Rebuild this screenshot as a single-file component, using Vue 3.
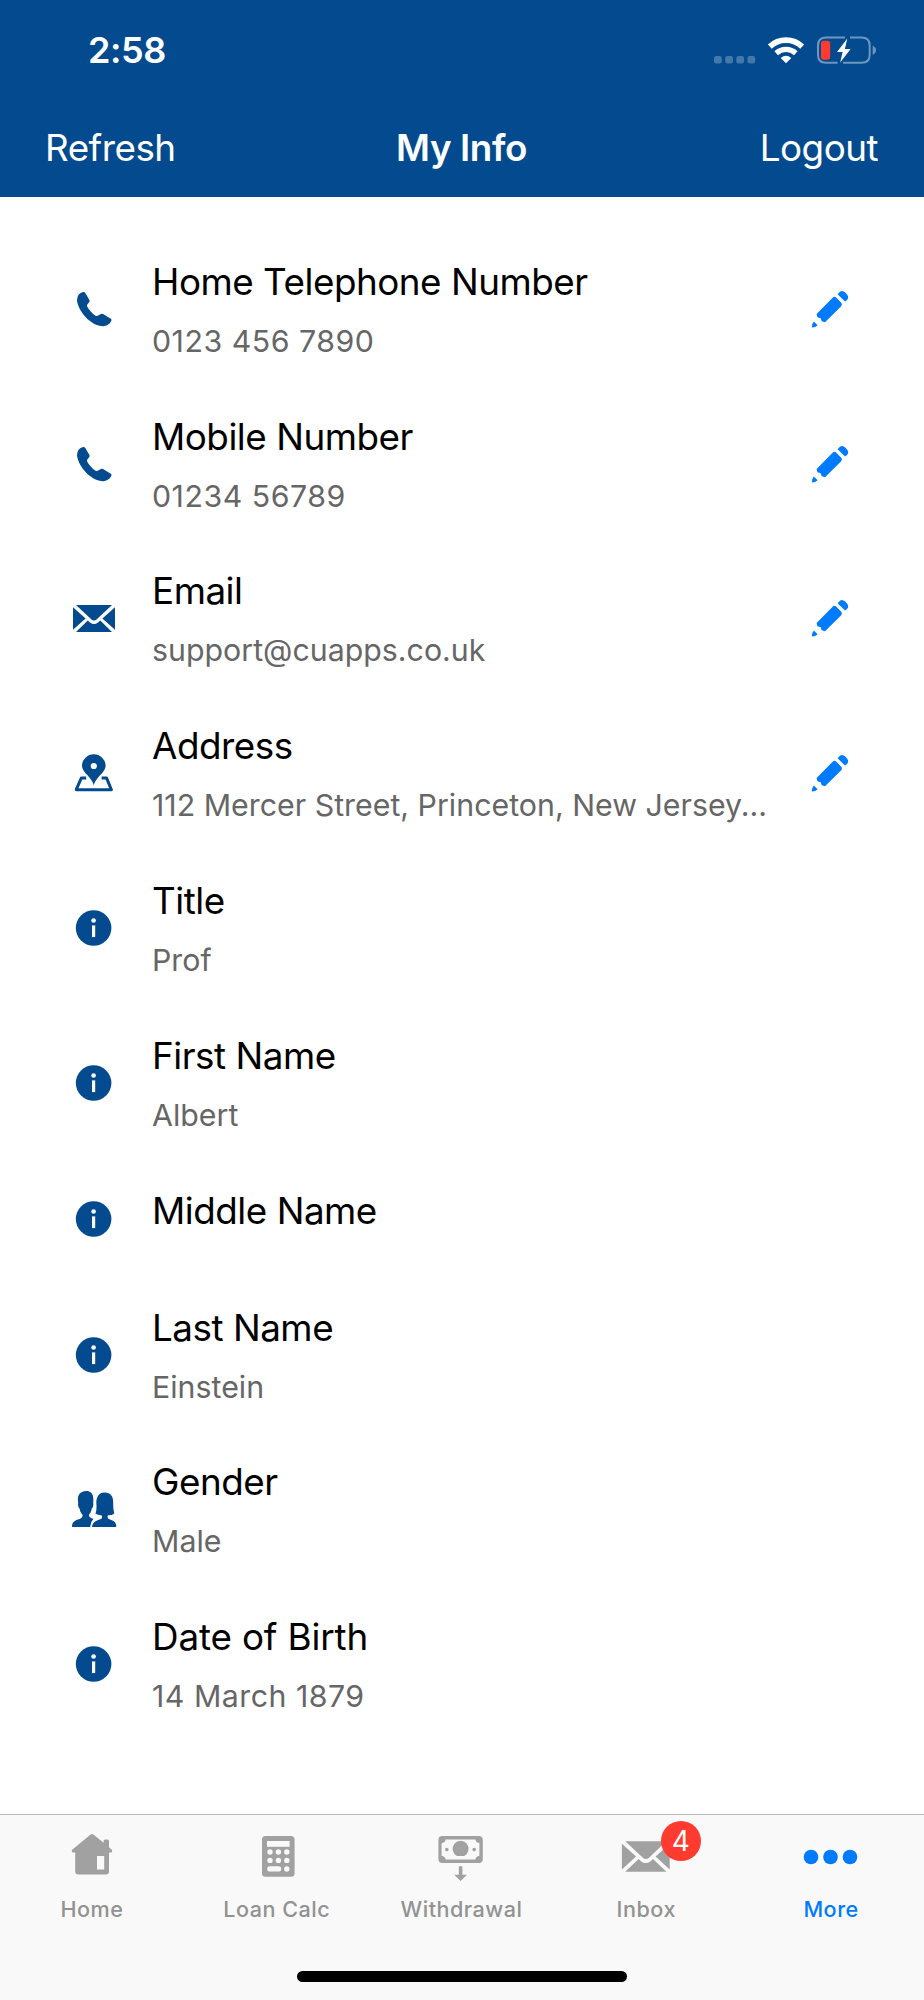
<script setup>
import { ref } from 'vue'

const fields = ref([
	{ id: 1, label: 'Home Telephone Number', value: '0123 456 7890', icon: 'phone', editable: true },
	{ id: 2, label: 'Mobile Number', value: '01234 56789', icon: 'phone', editable: true },
	{ id: 3, label: 'Email', value: 'support@cuapps.co.uk', icon: 'mail', editable: true },
	{
		id: 4,
		label: 'Address',
		value: '112 Mercer Street, Princeton, New Jersey...',
		icon: 'map',
		editable: true
	},
	{ id: 5, label: 'Title', value: 'Prof', icon: 'info' },
	{ id: 6, label: 'First Name', value: 'Albert', icon: 'info' },
	{ id: 7, label: 'Middle Name', value: '', icon: 'info' },
	{ id: 8, label: 'Last Name', value: 'Einstein', icon: 'info' },
	{ id: 9, label: 'Gender', value: 'Male', icon: 'people' },
	{ id: 10, label: 'Date of Birth', value: '14 March 1879', icon: 'info', date: true }
])

const tabs = [
	{ name: 'Home', icon: 'home' },
	{ name: 'Loan Calc', icon: 'calc' },
	{ name: 'Withdrawal', icon: 'cash' },
	{ name: 'Inbox', icon: 'mail', badge: 4 },
	{ name: 'More', icon: 'more' }
]
const activeTab = ref('More')
</script>

<template>
	<div class="screen">
		<header>
			<div class="status-bar">
				<span class="time">2:58</span>
				<svg class="status-icons" viewBox="0 0 163 28">
					<g fill="#fff" opacity="0.25">
						<rect x="0" y="20" width="7.8" height="7.6" rx="2.4" />
						<rect x="11.2" y="20" width="7.8" height="7.6" rx="2.4" />
						<rect x="22.3" y="20" width="7.8" height="7.6" rx="2.4" />
						<rect x="33.4" y="20" width="7.8" height="7.6" rx="2.4" />
					</g>
					<g fill="none" stroke="#fff">
						<path d="M55.8 10.6 A23.6 23.6 0 0 1 88.2 10.6" stroke-width="5.6" />
						<path d="M62.2 17.2 A14.4 14.4 0 0 1 81.8 17.2" stroke-width="5.4" />
					</g>
					<path d="M66.7 22 Q72 17.6 77.3 22 L72 27.2Z" fill="#fff" />
					<path
						d="M131 1.4 H112 Q104 1.4 104 9.4 V18.8 Q104 26.8 112 26.8 H123.5 M129 26.8 H147.5 Q155.7 26.8 155.7 18.8 V9.4 Q155.7 1.4 147.5 1.4 H136"
						fill="none"
						stroke="#6f96bf"
						stroke-width="2"
					/>
					<path d="M158.7 9.6 Q162 11.5 162 14.2 Q162 17 158.7 18.8Z" fill="#6f96bf" />
					<rect x="107" y="4.8" width="9.2" height="19" rx="3.2" fill="#ff3b30" />
					<path d="M133.3 2.6 L123 16 H128.6 L126.2 26.6 L136.6 13 H130.9Z" fill="#fff" />
				</svg>
			</div>
			<nav class="nav-bar">
				<span class="nav-action">Refresh</span>
				<h1>My Info</h1>
				<span class="nav-action right">Logout</span>
			</nav>
		</header>

		<main>
			<div v-for="field in fields" :key="field.id" class="row" :class="{ short: !field.value }">
				<svg v-if="field.icon === 'phone'" class="row-icon" viewBox="0 0 44 44">
					<path
						d="M11.3 5 Q5 6.4 5 13.5 C6.2 24 18.5 39.2 31.5 39.2 Q37.6 38.4 39.5 33.2 Q39.5 32.3 38.8 31.8 L31 27 Q29.9 26.4 28.9 26.9 L25.2 29 Q24.4 29.3 23.6 28.8 C20.4 26.6 16.8 22.8 15 19.2 Q14.8 18.4 15.3 17.6 L17.3 15 Q17.8 14.3 17.5 13.3 L13.3 5.9 Q12.5 4.8 11.3 5Z"
					/>
				</svg>
				<svg v-else-if="field.icon === 'mail'" class="row-icon" viewBox="0 0 44 44">
					<path d="M4 9 H40 L24.8 23.3 Q22 25.9 19.2 23.3Z" />
					<path d="M1 11.2 L13.6 22.5 L1 33.7Z M43 11.2 V33.7 L30.4 22.5Z" />
					<path
						d="M4 36 L15.8 24.5 L18 26.5 Q22 29.7 26 26.5 L28.2 24.5 L40 36Z"
					/>
				</svg>
				<svg v-else-if="field.icon === 'map'" class="row-icon" viewBox="0 0 44 44">
					<path
						fill-rule="evenodd"
						d="M21.7 34.1 Q20.6 30 15.5 24.3 Q10 19 10 14.7 A11.8 11.4 0 0 1 33.6 14.7 Q33.6 19 28 24.3 Q22.9 30 21.7 34.1Z M21.8 11.9 A3.1 3.1 0 1 0 21.8 18.1 A3.1 3.1 0 1 0 21.8 11.9Z"
					/>
					<path
						d="M14.2 27.1 H9.3 L4.2 38.7 H39.4 L34.6 27.1 H29.6"
						fill="none"
						stroke="#034b8e"
						stroke-width="3"
						stroke-linejoin="round"
					/>
				</svg>
				<svg v-else-if="field.icon === 'people'" class="row-icon" viewBox="0 0 44 44">
					<path
						d="M0 40 C0 35 2.6 33.4 7.6 32 Q10.8 31 10.6 28 Q8 25.4 7.5 21.4 Q5.6 20 6.2 15.5 C4.8 8.6 8 4.2 14 4 C19.5 4 22 7.4 21.2 15.5 Q21.8 20 19.8 21.4 Q19.2 25.4 16.9 28 Q16.7 30.4 21.4 31.8 Q19 34.5 18.2 40Z"
					/>
					<path
						d="M20 40 Q20.4 35.2 25 33.4 L29.4 31.8 Q30.6 30 29.5 28.2 Q26.4 28.6 23.5 26.6 Q25 23 24.3 15.5 C24.5 8.5 28 5.2 32.5 5.4 C39 5.4 41.4 9.5 41.2 16 Q41 22 42.3 26.4 Q39.5 28.5 35.9 28.2 Q35 30 36.3 31.8 L40.4 33.4 Q44.3 34.8 44.3 40Z"
					/>
				</svg>
				<svg v-else class="row-icon" viewBox="0 0 44 44">
					<circle cx="21.6" cy="22" r="17.8" />
					<circle cx="21.6" cy="14.5" r="2.3" fill="#fff" />
					<rect x="20" y="19.4" width="3.2" height="11.7" fill="#fff" />
				</svg>

				<div class="row-text" :class="{ date: field.date, numeric: field.icon === 'phone' }">
					<p class="label">{{ field.label }}</p>
					<p v-if="field.value" class="value">{{ field.value }}</p>
				</div>

				<svg v-if="field.editable" class="edit-icon" viewBox="0 0 38 38">
					<path
						d="M28.7 1.9 Q31.4 -0.1 34.2 2.6 L36 4.5 Q38.4 7.5 36 9.9 L34 11.6 L26.6 4.2Z M22.4 7 Q23.8 6.3 25.1 7.5 L30.5 13.1 Q31.4 14.7 30.2 16.2 L14 32.3 L10.7 31.3 L9.7 28.3 L6.4 27.2 L5.6 23.9Z M2.9 31.5 L6.6 35.2 Q4.4 37.6 0.8 37.5 Q0.7 33.9 2.9 31.5Z"
					/>
				</svg>
			</div>
		</main>

		<footer>
			<div class="tabs">
				<a
					v-for="tab in tabs"
					:key="tab.name"
					class="tab"
					:class="{ active: tab.name === activeTab }"
					@click="activeTab = tab.name"
				>
					<div class="tab-icon">
						<svg v-if="tab.icon === 'home'" viewBox="0 0 48 48">
							<path
								fill-rule="evenodd"
								d="M22.6 1.5 Q24 0.4 25.4 1.5 L35.6 9.8 V8 Q35.6 6.4 37.2 6.4 H39.4 Q41 6.4 41 8 V14.3 L43.8 16.8 Q44.8 18.2 43.6 19.4 H41 V38.3 Q41 41.6 37.7 41.6 H10.4 Q7.2 41.6 7.2 38.3 V19.4 H4.4 Q3 18.2 4.2 16.8Z M29 23 V36.6 H36.2 V23Z"
							/>
						</svg>
						<svg v-else-if="tab.icon === 'calc'" viewBox="0 0 48 48">
							<rect x="9" y="3" width="32.6" height="40.8" rx="3.6" />
							<g fill="#f9f9f9">
								<rect x="14" y="8" width="22.6" height="5.8" />
								<circle cx="17" cy="19" r="2.7" />
								<circle cx="25.4" cy="19" r="2.7" />
								<circle cx="33.8" cy="19" r="2.7" />
								<circle cx="17" cy="27.4" r="2.7" />
								<circle cx="25.4" cy="27.4" r="2.7" />
								<circle cx="33.8" cy="27.4" r="2.7" />
								<rect x="14.2" y="33.2" width="14" height="5.4" rx="2.7" />
								<circle cx="33.8" cy="36" r="2.7" />
							</g>
						</svg>
						<svg v-else-if="tab.icon === 'cash'" viewBox="0 0 48 48">
							<rect x="0.4" y="3" width="44.4" height="27" rx="4" />
							<path
								fill="#f9f9f9"
								d="M7.6 6.6 H37.4 Q37.8 9.8 41.4 10.2 V22.8 Q37.8 23.2 37.4 26.5 H7.6 Q7.2 23.2 3.6 22.8 V10.2 Q7.2 9.8 7.6 6.6Z"
							/>
							<path d="M19 23 A8 8 0 1 1 26.2 23Z" />
							<circle cx="8.8" cy="16.6" r="1.8" />
							<circle cx="36.2" cy="16.6" r="1.8" />
							<path d="M20.8 33.3 H24.4 V41.8 H29 L22.6 48 L16.2 41.8 H20.8Z" />
						</svg>
						<svg v-else-if="tab.icon === 'mail'" viewBox="0 0 48 48">
							<path d="M2.2 8.2 H43.4 L26.2 24.6 Q22.8 27.6 19.6 24.6Z" />
							<path d="M-1.1 10.8 L13 23.6 L-1.1 36.4Z M46.7 10.8 V36.4 L32.6 23.6Z" />
							<path d="M2.2 38.8 L15.6 26 L18 28.2 Q22.8 32 27.6 28.2 L30 26 L43.4 38.8Z" />
						</svg>
						<svg v-else viewBox="0 0 48 48">
							<circle cx="3" cy="24" r="7.3" />
							<circle cx="22.5" cy="24" r="7.3" />
							<circle cx="42" cy="24" r="7.3" />
						</svg>
						<span v-if="tab.badge" class="badge">{{ tab.badge }}</span>
					</div>
					<span class="tab-name">{{ tab.name }}</span>
				</a>
			</div>
			<div class="home-indicator"></div>
		</footer>
	</div>
</template>

<style>
body {
	margin: 0;
	background: #fff;
}
</style>

<style scoped>
.screen {
	width: 924px;
	height: 2000px;
	display: flex;
	flex-direction: column;
	overflow: hidden;
	background: #fff;
	font-family: Inter, 'Liberation Sans', sans-serif;
}
svg {
	display: block;
	overflow: visible;
}

/* header */
header {
	height: 197px;
	background: #034b8e;
	color: #fff;
}
.status-bar {
	box-sizing: border-box;
	height: 125px;
	padding: 28px 47px 0 88px;
	display: flex;
	justify-content: space-between;
	align-items: flex-start;
}
.time {
	font-size: 36px;
	line-height: 44px;
	font-weight: 600;
	letter-spacing: -0.4px;
}
.status-icons {
	width: 163px;
	height: 28px;
	margin-top: 8px;
}
.nav-bar {
	display: grid;
	grid-template-columns: 1fr auto 1fr;
	padding: 0 46px 0 45px;
	font-size: 36.8px;
	line-height: 45px;
}
.nav-action {
	letter-spacing: -0.5px;
}
.right {
	text-align: right;
}
h1 {
	margin: 0;
	font-size: inherit;
	font-weight: 600;
	letter-spacing: -0.4px;
}

/* list */
main {
	flex: 1;
	padding-top: 34.4px;
}
.row {
	box-sizing: border-box;
	height: 154.8px;
	display: flex;
	align-items: center;
	padding: 0 75px 0 72px;
}
.row.short {
	height: 117px;
}
.row-icon {
	width: 44px;
	height: 44px;
	flex-shrink: 0;
	fill: #034b8e;
}
.row-text {
	flex: 1;
	align-self: flex-start;
	padding-top: 26.5px;
	margin-left: 36px;
	white-space: nowrap;
}
p {
	margin: 0;
}
.label {
	font-size: 36.8px;
	line-height: 48px;
	letter-spacing: -0.47px;
	color: #000;
}
.value {
	margin-top: 15px;
	font-size: 30.3px;
	line-height: 40px;
	letter-spacing: 0.02px;
	color: #666;
}
.numeric .value,
.date .value {
	letter-spacing: 0.5px;
}
.date .label {
	letter-spacing: -0.15px;
}
.edit-icon {
	width: 38px;
	height: 38px;
	fill: #007aff;
}

/* tab bar */
footer {
	box-sizing: border-box;
	height: 186px;
	padding-bottom: 18px;
	display: flex;
	flex-direction: column;
	justify-content: space-between;
	align-items: center;
	background: #f9f9f9;
	border-top: 1px solid #b9b9b9;
}
.tabs {
	width: 100%;
	display: flex;
}
.tab {
	flex: 1;
	display: flex;
	flex-direction: column;
	align-items: center;
	padding-top: 18px;
	color: #929292;
	fill: #a1a1a1;
}
.tab.active {
	color: #007aff;
	fill: #007aff;
}
.tab-icon {
	position: relative;
	width: 48px;
	height: 48px;
}
.badge {
	position: absolute;
	top: -12px;
	left: 38px;
	width: 40px;
	height: 40px;
	border-radius: 50%;
	background: #ff3b30;
	color: #fff;
	font-size: 28px;
	line-height: 40px;
	text-align: center;
}
.tab-name {
	margin-top: 14px;
	margin-right: 1px;
	font-size: 21.6px;
	line-height: 28px;
	font-weight: 500;
	letter-spacing: 0.5px;
}
.home-indicator {
	width: 330px;
	height: 11px;
	border-radius: 6px;
	background: #000;
}
</style>
